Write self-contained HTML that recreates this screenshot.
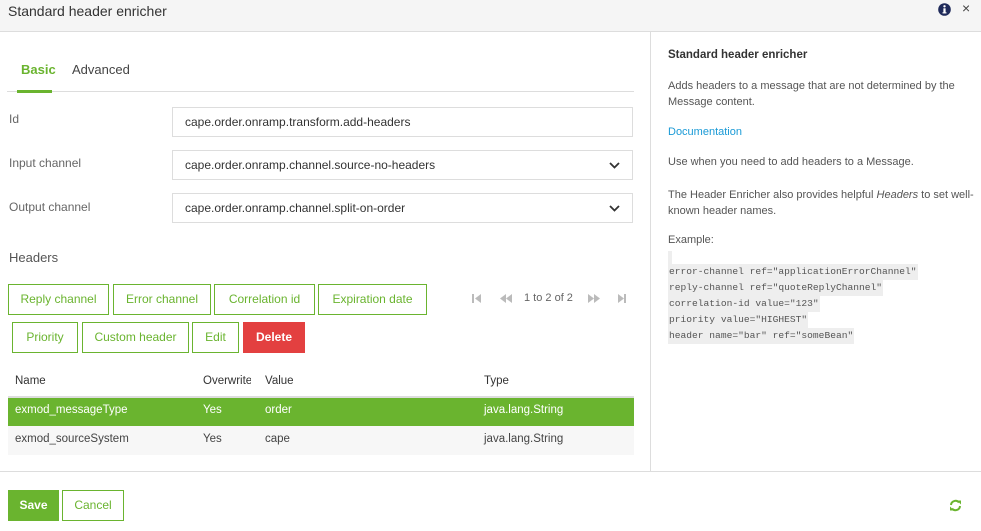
<!DOCTYPE html>
<html><head><meta charset="utf-8"><style>
*{box-sizing:border-box;margin:0;padding:0}
body{width:981px;height:531px;position:relative;background:#fff;font-family:"Liberation Sans",sans-serif;font-size:12px;color:#333;overflow:hidden}
.a{position:absolute;white-space:nowrap}
.hdr{left:0;top:0;width:981px;height:32px;background:#f5f5f5;border-bottom:1px solid #ddd}
.inp{position:absolute;left:172px;width:461px;height:30px;border:1px solid #ddd;background:#fff;padding:0 12px;line-height:28px;font-size:12px;color:#333}
.chev{position:absolute;right:12px;top:9px;width:11px;height:11px}
.lbl{left:9px;color:#666;font-size:12px}
.btn{position:absolute;height:31px;border:1px solid #6ab42f;color:#6ab42f;background:#fff;text-align:center;line-height:29px;font-size:12px}
.code{display:block;width:fit-content;height:16px;background:#eee;font-family:"Liberation Mono",monospace;font-size:9.6px;color:#555;line-height:16px;padding:0 1px}
</style></head><body>
<div class="a hdr"></div>
<div class="a" style="left:8px;top:3px;font-size:14px;color:#333">Standard header enricher</div>
<svg class="a" style="left:938px;top:3px" width="13" height="13" viewBox="0 0 13 13"><circle cx="6.5" cy="6.5" r="6.3" fill="#1f2a5a"/><circle cx="6.5" cy="3.3" r="1.2" fill="#fff"/><rect x="5.4" y="5.3" width="2.2" height="5" fill="#fff"/><rect x="4.5" y="9.3" width="4" height="1.1" fill="#fff"/></svg>
<div class="a" style="left:962px;top:0px;font-size:14px;color:#444">×</div>
<div class="a" style="left:650px;top:32px;width:1px;height:440px;background:#ddd"></div>

<div class="a" style="left:21px;top:62px;font-size:13px;font-weight:bold;color:#6ab42f">Basic</div>
<div class="a" style="left:72px;top:62px;font-size:13px;color:#444">Advanced</div>
<div class="a" style="left:7px;top:91px;width:627px;height:1px;background:#ddd"></div>
<div class="a" style="left:17px;top:90px;width:35px;height:3px;background:#6ab42f"></div>

<div class="a lbl" style="top:112px">Id</div>
<div class="inp" style="top:107px">cape.order.onramp.transform.add-headers</div>
<div class="a lbl" style="top:156px">Input channel</div>
<div class="inp" style="top:150px">cape.order.onramp.channel.source-no-headers<svg class="chev" viewBox="0 0 11 11"><path d="M1 3L5.5 7.5 10 3" stroke="#333" stroke-width="1.8" fill="none"/></svg></div>
<div class="a lbl" style="top:200px">Output channel</div>
<div class="inp" style="top:193px">cape.order.onramp.channel.split-on-order<svg class="chev" viewBox="0 0 11 11"><path d="M1 3L5.5 7.5 10 3" stroke="#333" stroke-width="1.8" fill="none"/></svg></div>

<div class="a" style="left:9px;top:250px;font-size:13px;color:#555">Headers</div>
<div class="btn" style="left:8px;top:284px;width:101px">Reply channel</div>
<div class="btn" style="left:113px;top:284px;width:98px">Error channel</div>
<div class="btn" style="left:214px;top:284px;width:101px">Correlation id</div>
<div class="btn" style="left:318px;top:284px;width:109px">Expiration date</div>
<div class="btn" style="left:12px;top:322px;width:66px">Priority</div>
<div class="btn" style="left:82px;top:322px;width:107px">Custom header</div>
<div class="btn" style="left:192px;top:322px;width:47px">Edit</div>
<div class="btn" style="left:243px;top:322px;width:62px;background:#e34040;border-color:#e34040;color:#fff;font-weight:bold">Delete</div>

<svg class="a" style="left:472px;top:293px" width="160" height="11" viewBox="0 0 160 11"><g fill="#bbb"><rect x="0" y="1" width="2" height="9"/><path d="M9 1L3 5.5 9 10z"/><path d="M34 1L28 5.5 34 10zM40 1L34 5.5 40 10z"/><path d="M116 1L122 5.5 116 10zM122 1L128 5.5 122 10z"/><path d="M146 1L152 5.5 146 10z"/><rect x="152" y="1" width="2" height="9"/></g></svg>
<div class="a" style="left:524px;top:292px;font-size:11px;color:#666">1 to 2 of 2</div>

<div class="a" style="left:15px;top:375px;font-size:11.5px;color:#333">Name</div>
<div class="a" style="left:203px;top:375px;font-size:11.5px;color:#333;width:48px;overflow:hidden">Overwrite</div>
<div class="a" style="left:265px;top:375px;font-size:11.5px;color:#333">Value</div>
<div class="a" style="left:484px;top:375px;font-size:11.5px;color:#333">Type</div>
<div class="a" style="left:8px;top:396px;width:626px;height:2px;background:#ddd"></div>
<div class="a" style="left:8px;top:398px;width:626px;height:28px;background:#6ab42f"></div>
<div class="a" style="left:8px;top:426px;width:626px;height:29px;background:#f7f7f7"></div>
<div class="a" style="left:15px;top:404px;color:#fff;font-size:11.5px">exmod_messageType</div>
<div class="a" style="left:203px;top:404px;color:#fff;font-size:11.5px">Yes</div>
<div class="a" style="left:265px;top:404px;color:#fff;font-size:11.5px">order</div>
<div class="a" style="left:484px;top:404px;color:#fff;font-size:11.5px">java.lang.String</div>
<div class="a" style="left:15px;top:433px;color:#444;font-size:11.5px">exmod_sourceSystem</div>
<div class="a" style="left:203px;top:433px;color:#444;font-size:11.5px">Yes</div>
<div class="a" style="left:265px;top:433px;color:#444;font-size:11.5px">cape</div>
<div class="a" style="left:484px;top:433px;color:#444;font-size:11.5px">java.lang.String</div>

<div class="a" style="left:0;top:471px;width:981px;height:1px;background:#ddd"></div>
<div class="btn" style="left:8px;top:490px;width:51px;background:#6ab42f;color:#fff;font-weight:bold">Save</div>
<div class="btn" style="left:62px;top:490px;width:62px">Cancel</div>
<svg class="a" style="left:949px;top:499px" width="13" height="13" viewBox="0 0 13 13"><g fill="none" stroke="#6ab42f" stroke-width="2"><path d="M2 6A4.5 4.5 0 0 1 10 3.5"/><path d="M11 7A4.5 4.5 0 0 1 3 9.5"/></g><path d="M8 1.5h4v4z" fill="#6ab42f"/><path d="M5 11.5H1v-4z" fill="#6ab42f"/></svg>

<div class="a" style="left:668px;top:49px;font-size:11.5px;font-weight:bold;color:#333">Standard header enricher</div>
<div class="a" style="left:668px;top:78px;font-size:11px;color:#555;line-height:16px">Adds headers to a message that are not determined by the<br>Message content.</div>
<div class="a" style="left:668px;top:126px;font-size:11px;color:#1a9ad6">Documentation</div>
<div class="a" style="left:668px;top:156px;font-size:11px;color:#555">Use when you need to add headers to a Message.</div>
<div class="a" style="left:668px;top:187px;font-size:11px;color:#555;line-height:16px">The Header Enricher also provides helpful <i>Headers</i> to set well-<br>known header names.</div>
<div class="a" style="left:668px;top:234px;font-size:11px;color:#555">Example:</div>
<div class="a" style="left:668px;top:251px;width:4px;height:13px;background:#eee"></div>
<div class="a" style="left:668px;top:264px"><span class="code">error-channel ref="applicationErrorChannel"</span><span class="code">reply-channel ref="quoteReplyChannel"</span><span class="code">correlation-id value="123"</span><span class="code">priority value="HIGHEST"</span><span class="code">header name="bar" ref="someBean" </span></div>
</body></html>
